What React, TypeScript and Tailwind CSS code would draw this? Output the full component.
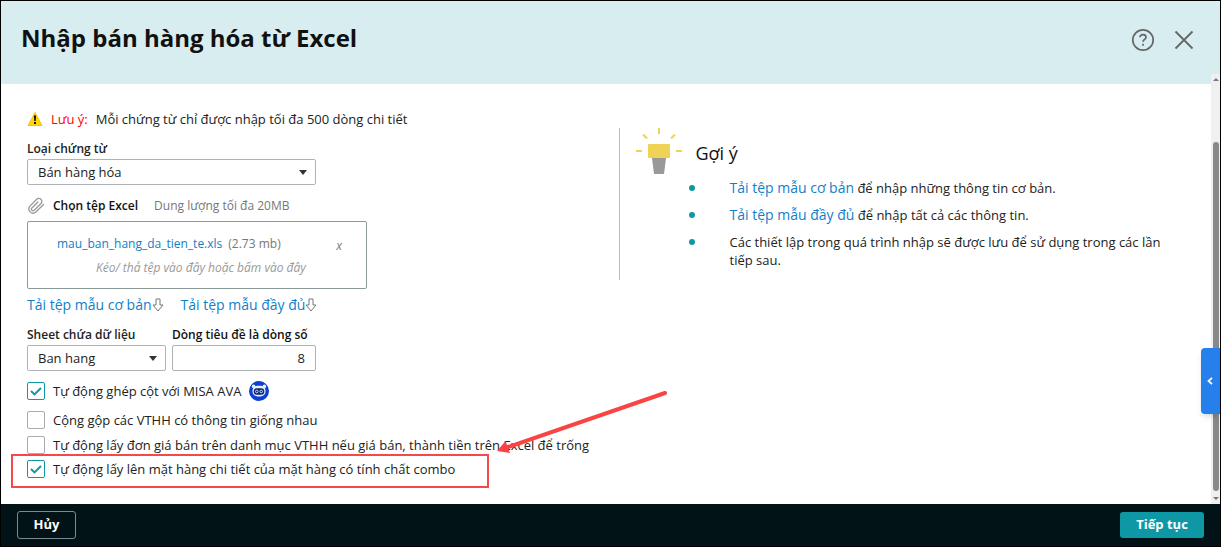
import { useState, type ReactNode } from "react";

interface CheckRowProps {
  id: string;
  label: string;
  defaultChecked?: boolean;
  className?: string;
  children?: ReactNode;
}

const FILE_NAME = "mau_ban_hang_da_tien_te.xls";

function CheckRow({ id, label, defaultChecked = false, className = "", children }: CheckRowProps) {
  return (
    <div className={`flex h-5 items-center ${className}`}>
      <span className="grid shrink-0">
        <input
          id={id}
          type="checkbox"
          defaultChecked={defaultChecked}
          className="peer col-start-1 row-start-1 size-[18px] appearance-none rounded-[2px] border border-[#a9adb0] bg-white checked:border-[#1097a5]"
        />
        <svg
          viewBox="0 0 18 18"
          className="pointer-events-none invisible col-start-1 row-start-1 size-[18px] peer-checked:visible"
        >
          <path d="M4 9l3.500 3.400L14 6" fill="none" stroke="#1097a5" strokeWidth="2" />
        </svg>
      </span>
      <label htmlFor={id} className="ml-2 pt-0.5 whitespace-nowrap">
        {label}
      </label>
      {children}
    </div>
  );
}

function SelectBox({ id, value, className }: { id: string; value: string; className: string }) {
  return (
    <div className={`grid items-center ${className}`}>
      <select
        id={id}
        defaultValue={value}
        className="col-start-1 row-start-1 h-[26px] w-full appearance-none rounded-[2px] border border-[#afb3b7] bg-white px-2.5 pt-0.5"
      >
        <option>{value}</option>
      </select>
      <svg
        viewBox="0 0 8 5"
        className="pointer-events-none col-start-1 row-start-1 mr-[9px] h-[5px] w-2 justify-self-end"
      >
        <path d="M0 0h8L4 5z" fill="#333" />
      </svg>
    </div>
  );
}

function DownArrow() {
  return (
    <svg viewBox="0 0 12 14" className="h-3.5 w-3">
      <path d="M4 1h4v6h3l-5 6-5-6h3z" fill="none" stroke="#777" strokeLinejoin="round" />
    </svg>
  );
}

function TemplateLink({ children }: { children: ReactNode }) {
  return (
    <a href="#" className="text-sm leading-[18px] text-[#1080c8]">
      {children}
    </a>
  );
}

function Bullet() {
  return <span className="mt-1.5 mr-[35px] size-1.5 shrink-0 rounded-full bg-[#1097a5]" />;
}

function WarningIcon() {
  return (
    <svg viewBox="0 0 16 16" className="size-4">
      <path d="M8 1.500L15 14.500H1z" fill="#ffd60a" stroke="#f5c21b" strokeLinejoin="round" />
      <path d="M6.900 4.500h2.200l-.4 5.500H7.300zM7 11h2v2H7z" fill="#111" />
    </svg>
  );
}

function RobotIcon() {
  return (
    <svg viewBox="0 0 20 20" className="ml-2 size-5">
      <circle cx="10" cy="10" r="10" fill="#0b3fd6" />
      <circle cx="4.600" cy="5.400" r="1.800" fill="#e8f1ff" />
      <circle cx="15.400" cy="5.400" r="1.800" fill="#e8f1ff" />
      <rect x="3.500" y="4.800" width="13" height="10.700" rx="5" fill="#e8f1ff" />
      <rect x="4.700" y="7.200" width="10.600" height="6.600" rx="3" fill="#15246b" />
      <circle cx="7.800" cy="10.500" r="1.300" fill="none" stroke="#b9dcff" />
      <circle cx="12.200" cy="10.500" r="1.300" fill="none" stroke="#b9dcff" />
    </svg>
  );
}

function BulbIcon() {
  return (
    <svg viewBox="0 0 46 46" className="h-[46px] w-[46px]">
      <rect x="12" y="16" width="22" height="14" rx="1" fill="#f0d355" />
      <path d="M16 30h14l-2 16H18z" fill="#999" />
      <path
        d="M23 0v6M7 6.500l4 4M39 6.500l-4 4M0 23h6M40 23h6"
        fill="none"
        stroke="#f0d355"
        strokeWidth="2"
      />
    </svg>
  );
}

export default function App() {
  const [file, setFile] = useState<string | null>(FILE_NAME);

  return (
    <div className="relative flex min-h-screen flex-col border border-black bg-white font-['Open_Sans','Noto_Sans',sans-serif] text-[13px] text-[#222]">
      <header className="flex h-[83px] items-start justify-between bg-[#d8edf0] pr-[26px] pl-5">
        <h1 className="mt-5 text-2xl leading-[34px] font-bold text-[#111]">
          Nhập bán hàng hóa từ Excel
        </h1>
        <div className="mt-[27px] flex items-center gap-[19px]">
          <button aria-label="Trợ giúp">
            <svg viewBox="0 0 24 24" className="size-6" fill="none" stroke="#666" strokeWidth="1.700">
              <circle cx="12" cy="12" r="10.200" />
              <path d="M9 9.300C9 7.500 10.200 6.700 12 6.700s3 .9 3 2.500c0 2-3 2.300-3 4.600M12 15.800v2" />
            </svg>
          </button>
          <button aria-label="Đóng">
            <svg viewBox="0 0 20 20" className="size-5" fill="none" stroke="#666" strokeWidth="1.800">
              <path d="M1.500 1.500l17 17M18.500 1.500l-17 17" />
            </svg>
          </button>
        </div>
      </header>

      <main className="relative grid flex-1 grid-cols-2 pr-2.5 pl-[26px]">
        <section className="pt-[25px]">
          <p className="flex h-5 items-center">
            <WarningIcon />
            <span className="ml-2 pt-0.5 text-[#f00]">Lưu ý:</span>
            <span className="ml-2 pt-0.5">Mỗi chứng từ chỉ được nhập tối đa 500 dòng chi tiết</span>
          </p>

          <label htmlFor="voucher" className="mt-2.5 block h-5 text-xs leading-5 font-semibold">
            Loại chứng từ
          </label>
          <SelectBox id="voucher" value="Bán hàng hóa" className="w-[289px]" />

          <div className="mt-[11px] flex h-5 items-center">
            <svg viewBox="0 0 18 18" className="size-[18px]">
              <path
                d="M16.500 7.500l-7.800 7.800a4.300 4.300 0 0 1-6-6l7-7a3 3 0 0 1 4.300 4.200l-6.800 6.800a1.600 1.600 0 0 1-2.300-2.300l6-6"
                fill="none"
                stroke="#999"
                strokeWidth="1.300"
                strokeLinecap="round"
              />
            </svg>
            <label htmlFor="file" className="ml-2 text-xs font-semibold text-[#111]">
              Chọn tệp Excel
            </label>
            <span className="ml-4 text-xs text-[#777]">Dung lượng tối đa 20MB</span>
          </div>

          {/* Vùng thả tệp */}
          <div className="mt-[5px] h-[68px] w-[340px] rounded-[2px] border border-[#8a9a9b] pt-3">
            <div className="flex h-5 items-center justify-between pr-6 pl-[29px] text-xs text-[#777]">
              {file && (
                <>
                  <p>
                    <a href="#" className="text-[#1080c8]">{file}</a>
                    <span className="ml-1.5">(2.73 mb)</span>
                  </p>
                  <button aria-label="Xóa tệp" className="mt-1 italic" onClick={() => setFile(null)}>
                    x
                  </button>
                </>
              )}
            </div>
            <label htmlFor="file" className="mt-1 block pl-[68px] text-xs leading-5 text-[#999] italic">
              Kéo/ thả tệp vào đây hoặc bấm vào đây
            </label>
            <input id="file" type="file" className="sr-only" />
          </div>

          <div className="mt-1.5 flex h-5 items-center gap-[17px]">
            <span className="flex items-center">
              <TemplateLink>Tải tệp mẫu cơ bản</TemplateLink>
              <DownArrow />
            </span>
            <span className="flex items-center">
              <TemplateLink>Tải tệp mẫu đầy đủ</TemplateLink>
              <DownArrow />
            </span>
          </div>

          <div className="mt-2.5 flex gap-1.5">
            <div className="w-[139px]">
              <label htmlFor="sheet" className="block h-5 text-xs leading-5 font-semibold">
                Sheet chứa dữ liệu
              </label>
              <SelectBox id="sheet" value="Ban hang" className="w-full" />
            </div>
            <div className="w-36">
              <label htmlFor="row" className="block h-5 text-xs leading-5 font-semibold whitespace-nowrap text-[#111]">
                Dòng tiêu đề là dòng số
              </label>
              <input
                id="row"
                type="text"
                defaultValue="8"
                className="block h-[26px] w-full rounded-[2px] border border-[#afb3b7] px-2.5 text-right"
              />
            </div>
          </div>

          <CheckRow id="ava" label="Tự động ghép cột với MISA AVA" defaultChecked className="mt-2.5">
            <RobotIcon />
          </CheckRow>
          <CheckRow id="merge" label="Cộng gộp các VTHH có thông tin giống nhau" className="mt-[9px]" />
          <CheckRow
            id="price"
            label="Tự động lấy đơn giá bán trên danh mục VTHH nếu giá bán, thành tiền trên Excel để trống"
            className="mt-[5px]"
          />
          <CheckRow
            id="combo"
            label="Tự động lấy lên mặt hàng chi tiết của mặt hàng có tính chất combo"
            defaultChecked
            className="mt-1"
          />
        </section>

        <section className="mt-11 h-[152px] self-start border-l border-[#b8bcbf] pl-4">
          <div className="flex h-[46px] items-center">
            <BulbIcon />
            <h2 className="ml-3.5 pt-1 text-lg leading-6 text-[#111]">Gợi ý</h2>
          </div>
          <ul className="mt-[5px] space-y-[9px] pr-10 pl-[53px] leading-[18px]">
            <li className="flex">
              <Bullet />
              <span>
                <TemplateLink>Tải tệp mẫu cơ bản</TemplateLink> để nhập những thông tin cơ bản.
              </span>
            </li>
            <li className="flex">
              <Bullet />
              <span>
                <TemplateLink>Tải tệp mẫu đầy đủ</TemplateLink> để nhập tất cả các thông tin.
              </span>
            </li>
            <li className="flex">
              <Bullet />
              <span>Các thiết lập trong quá trình nhập sẽ được lưu để sử dụng trong các lần tiếp sau.</span>
            </li>
          </ul>
        </section>

        {/* Thanh cuộn */}
        <div className="absolute -top-2.5 right-0 bottom-0 flex w-[9px] flex-col items-center bg-[#f0f0f0] py-1">
          <svg viewBox="0 0 6 3" className="h-[3px] w-1.5">
            <path d="M0 3h6L3 0z" fill="#777" />
          </svg>
          <div className="mt-[61px] w-1.5 flex-1 rounded-full bg-[#888]" />
          <svg viewBox="0 0 6 3" className="mt-1.5 h-[3px] w-1.5">
            <path d="M0 0h6L3 3z" fill="#777" />
          </svg>
        </div>
        <button
          aria-label="Mở rộng"
          className="absolute top-[264px] right-0 flex h-[66px] w-[19px] items-center justify-center rounded-l bg-[#2680eb] shadow-md"
        >
          <svg viewBox="0 0 6 8" className="mr-0.5 h-2 w-1.5">
            <path d="M5 .8L1.500 4 5 7.200" fill="none" stroke="#fff" strokeWidth="1.800" />
          </svg>
        </button>

        {/* Khung và mũi tên đánh dấu */}
        <div className="pointer-events-none absolute top-[370px] left-2.5 h-[34px] w-[478px] border-2 border-[#f54848]" />
        <svg viewBox="0 0 172 66" className="pointer-events-none absolute top-[306px] left-[495px] h-[66px] w-[172px]">
          <path d="M169 3L12 57" fill="none" stroke="#f94444" strokeWidth="4" strokeLinecap="round" />
          <path d="M1 61L9.500 51 14 63z" fill="#f94444" />
        </svg>
      </main>

      <footer className="flex h-[42px] items-center justify-between bg-[#021317] px-4 font-bold text-white">
        <button className="h-7 w-[59px] rounded-[3px] border border-[#7f8a8c]">Hủy</button>
        <button className="h-[26px] w-[84px] rounded-[3px] bg-[#0e98a6]">Tiếp tục</button>
      </footer>
    </div>
  );
}
